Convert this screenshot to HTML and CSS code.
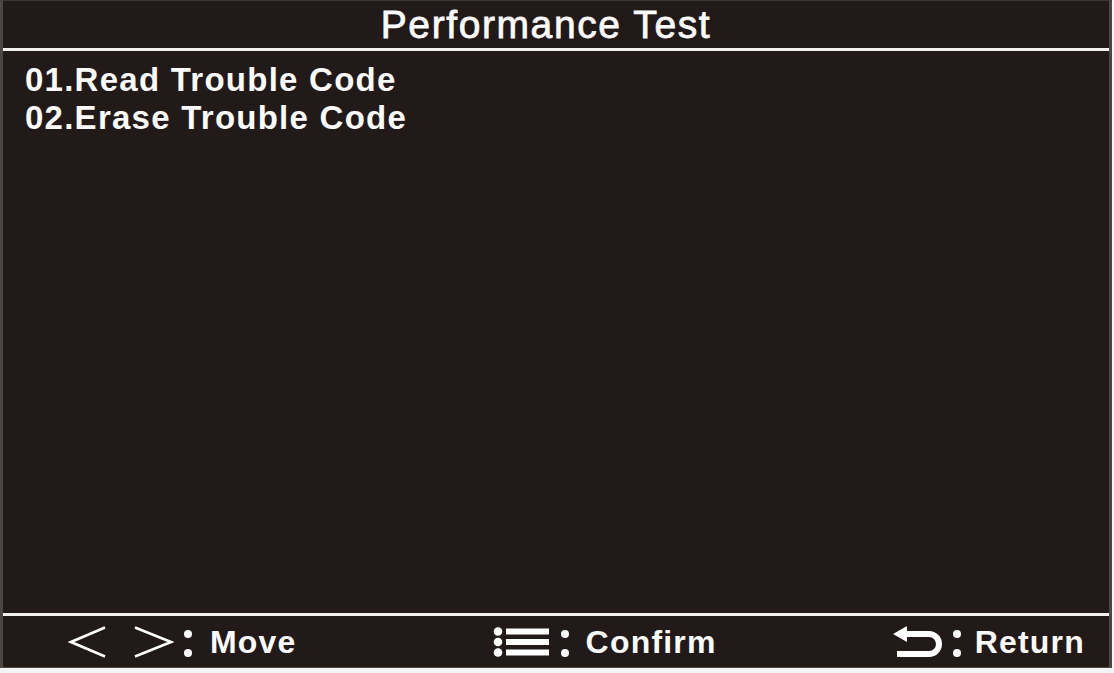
FILE: index.html
```html
<!DOCTYPE html>
<html>
<head>
<meta charset="utf-8">
<link rel="stylesheet" href="styles.css">
</head>
<body>
<div class="screen">
  <header class="title-bar">Performance Test</header>
  <ul class="menu">
    <li>01.Read Trouble Code</li>
    <li>02.Erase Trouble Code</li>
  </ul>
  <footer class="footer">
    <div class="hint hint-move">
      <svg class="ico-arrows" width="106" height="32" viewBox="0 0 106 32">
        <polyline points="37,1.5 3,16 37,30.5" fill="none" stroke="#fff" stroke-width="2.6"/>
        <polyline points="67,1.5 103,16 67,30.5" fill="none" stroke="#fff" stroke-width="2.6"/>
      </svg>
      <span class="colon"><i></i><i></i></span>
      <span class="label">Move</span>
    </div>
    <div class="hint hint-confirm">
      <svg class="ico-menu" width="56" height="30" viewBox="0 0 56 30">
        <circle cx="5" cy="4.5" r="4.3" fill="#fff"/>
        <circle cx="5" cy="15" r="4.3" fill="#fff"/>
        <circle cx="5" cy="25.5" r="4.3" fill="#fff"/>
        <rect x="13" y="1.5" width="43" height="6" fill="#fff"/>
        <rect x="13" y="12" width="43" height="6" fill="#fff"/>
        <rect x="13" y="22.5" width="43" height="6" fill="#fff"/>
      </svg>
      <span class="colon"><i></i><i></i></span>
      <span class="label">Confirm</span>
    </div>
    <div class="hint hint-return">
      <svg class="ico-return" width="52" height="32" viewBox="0 0 52 32">
        <path d="M0,8 L14,0 L14,16 Z" fill="#fff"/>
        <path d="M12,8 H36 A10,10 0 0 1 36,28 H4" fill="none" stroke="#fff" stroke-width="6"/>
      </svg>
      <span class="colon"><i></i><i></i></span>
      <span class="label">Return</span>
    </div>
  </footer>
</div>
</body>
</html>
```

FILE: styles.css
```css
html, body {
  margin: 0;
  padding: 0;
  background: #f4f4f4;
}

body {
  width: 1114px;
  height: 673px;
  overflow: hidden;
  font-family: "Liberation Sans", Arial, sans-serif;
  color: #fbfbfb;
}

.screen {
  box-sizing: border-box;
  width: 1112px;
  height: 668px;
  background: #221a19;
  border-top: 1px solid #3e3635;
  border-left: 3px solid #4c4645;
  border-right: 3px solid #4c4645;
  border-bottom: 1px solid #4c4645;
  display: flex;
  flex-direction: column;
}

.title-bar {
  height: 50px;
  box-sizing: border-box;
  border-bottom: 3px solid #f4f0ee;
  padding-right: 20px;
  text-align: center;
  font-size: 39px;
  letter-spacing: 1.6px;
  line-height: 48px;
  font-weight: normal;
  -webkit-text-stroke: 0.8px #fbfbfb;
}

.menu {
  list-style: none;
  margin: 0;
  padding: 10px 0 0 22px;
  flex: 1;
}

.menu li {
  font-size: 33px;
  font-weight: bold;
  letter-spacing: 1.25px;
  line-height: 38px;
  height: 38px;
}

.footer {
  height: 54px;
  box-sizing: border-box;
  border-top: 3px solid #f4f0ee;
  display: flex;
  align-items: center;
  justify-content: space-between;
  padding: 0 24px 0 65px;
}

.hint {
  display: flex;
  align-items: center;
}

.hint svg {
  display: block;
}

.colon {
  display: flex;
  flex-direction: column;
  gap: 11px;
  margin: 3px 18px 0 10px;
}

.colon i {
  display: block;
  width: 8px;
  height: 8px;
  border-radius: 50%;
  background: #fbfbfb;
}

.label {
  font-size: 32px;
  font-weight: bold;
  letter-spacing: 1.2px;
  line-height: 40px;
}

.hint-confirm {
  margin-left: 20px;
}

.hint-confirm .colon {
  margin-left: 12px;
  margin-right: 17px;
}

.hint-return .colon {
  margin-left: 8px;
  margin-right: 14px;
}
```
